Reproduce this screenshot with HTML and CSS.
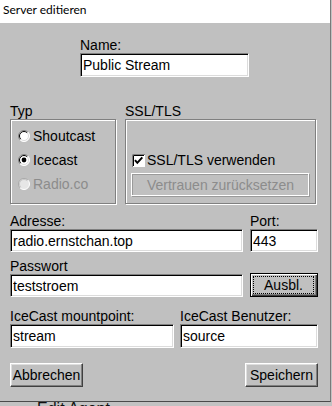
FILE: index.html
```html
<!DOCTYPE html>
<html lang="de">
<head>
<meta charset="utf-8">
<title>Server editieren</title>
<link rel="stylesheet" href="styles.css">
</head>
<body>
<div class="window">
  <div class="titlebar">Server editieren</div>
  <div class="content">
    <div class="name-block">
      <div class="lbl">Name:</div>
      <input class="field name-field" value="Public Stream">
    </div>

    <div class="groups">
      <div class="group">
        <div class="lbl">Typ</div>
        <div class="box typ-box">
          <div class="opt">
            <svg class="radio" width="12" height="12" viewBox="0 0 12 12">
              <circle cx="6" cy="6" r="5.5" fill="#fff"/>
              <path d="M2.1 9.9A5.5 5.5 0 0 1 9.9 2.1" fill="none" stroke="#808080"/>
              <path d="M9.9 2.1A5.5 5.5 0 0 1 2.1 9.9" fill="none" stroke="#fff"/>
              <path d="M2.8 9.2A4.5 4.5 0 0 1 9.2 2.8" fill="none" stroke="#000"/>
              <path d="M9.2 2.8A4.5 4.5 0 0 1 2.8 9.2" fill="none" stroke="#dcdcdc"/>
            </svg>
            <span>Shoutcast</span>
          </div>
          <div class="opt">
            <svg class="radio" width="12" height="12" viewBox="0 0 12 12">
              <circle cx="6" cy="6" r="5.5" fill="#fff"/>
              <path d="M2.1 9.9A5.5 5.5 0 0 1 9.9 2.1" fill="none" stroke="#808080"/>
              <path d="M9.9 2.1A5.5 5.5 0 0 1 2.1 9.9" fill="none" stroke="#fff"/>
              <path d="M2.8 9.2A4.5 4.5 0 0 1 9.2 2.8" fill="none" stroke="#000"/>
              <path d="M9.2 2.8A4.5 4.5 0 0 1 2.8 9.2" fill="none" stroke="#dcdcdc"/>
              <circle cx="6" cy="6" r="2.4" fill="#000"/>
            </svg>
            <span>Icecast</span>
          </div>
          <div class="opt disabled">
            <svg class="radio" width="12" height="12" viewBox="0 0 12 12">
              <circle cx="6" cy="6" r="5.5" fill="#e6e6e6"/>
              <path d="M2.1 9.9A5.5 5.5 0 0 1 9.9 2.1" fill="none" stroke="#a8a8a8"/>
              <path d="M9.9 2.1A5.5 5.5 0 0 1 2.1 9.9" fill="none" stroke="#fff"/>
              <path d="M2.8 9.2A4.5 4.5 0 0 1 9.2 2.8" fill="none" stroke="#c8c8c8"/>
            </svg>
            <span>Radio.co</span>
          </div>
        </div>
      </div>

      <div class="group">
        <div class="lbl">SSL/TLS</div>
        <div class="box ssl-box">
          <div class="check-row">
            <svg class="check" width="13" height="13" viewBox="0 0 13 13">
              <rect x="0" y="0" width="13" height="13" fill="#fff"/>
              <path d="M0.5 13V0.5H13" fill="none" stroke="#808080"/>
              <path d="M1.5 12V1.5H12" fill="none" stroke="#000"/>
              <path d="M3 6.2L5.3 8.8L10.3 3.3" fill="none" stroke="#000" stroke-width="2"/>
            </svg>
            <span>SSL/TLS verwenden</span>
          </div>
          <div class="btn btn-disabled">Vertrauen zurücksetzen</div>
        </div>
      </div>
    </div>

    <div class="row row-addr">
      <div class="col w-main">
        <div class="lbl">Adresse:</div>
        <input class="field h23" value="radio.ernstchan.top">
      </div>
      <div class="col w-side">
        <div class="lbl">Port:</div>
        <input class="field h23" value="443">
      </div>
    </div>

    <div class="row row-pass">
      <div class="col w-main">
        <div class="lbl">Passwort</div>
        <input class="field h23" value="teststroem">
      </div>
      <div class="col w-side col-end">
        <div class="btn btn-focus h23"><span class="focus-ring">Ausbl.</span></div>
      </div>
    </div>

    <div class="row row-ice">
      <div class="col w-mount">
        <div class="lbl">IceCast mountpoint:</div>
        <input class="field h24" value="stream">
      </div>
      <div class="col w-user">
        <div class="lbl">IceCast Benutzer:</div>
        <input class="field h24" value="source">
      </div>
    </div>

    <div class="actions">
      <div class="btn btn-action">Abbrechen</div>
      <div class="btn btn-action">Speichern</div>
    </div>
  </div>
</div>
<div class="behind">Edit Agent</div>
</body>
</html>
```

FILE: styles.css
```css
* {
  box-sizing: border-box;
}

html,
body {
  margin: 0;
  padding: 0;
}

body {
  width: 332px;
  height: 406px;
  overflow: hidden;
  background: #c2c2c2;
  font-family: "Liberation Sans", Arial, sans-serif;
  font-size: 14px;
  color: #000;
}

.window {
  width: 331px;
  height: 402px;
  background: #c0c0c0;
  border-right: 1px solid #7a7a7a;
  border-bottom: 1px solid #4a4a4a;
  display: flex;
  flex-direction: column;
}

.titlebar {
  height: 23px;
  flex: none;
  background: #fff;
  padding-left: 3px;
  font-family: Lato, "Noto Sans", sans-serif;
  font-size: 12px;
  line-height: 20px;
  color: #000;
}

.content {
  display: flex;
  flex-direction: column;
  padding: 15px 12px 0 10px;
}

.lbl {
  height: 15px;
  line-height: 15px;
  white-space: nowrap;
}

.field {
  display: block;
  margin: 0;
  padding: 0 2px;
  font-family: "Liberation Sans", Arial, sans-serif;
  font-size: 14px;
  color: #000;
  background: #fff;
  border: 1px solid;
  border-color: #808080 #fff #fff #808080;
  box-shadow: inset 1px 1px 0 #000, inset -1px -1px 0 #dcdcdc;
  outline: none;
  width: 100%;
  height: 23px;
}

.h23 {
  height: 23px;
}

.h24 {
  height: 24px;
}

.name-block {
  margin-left: 70px;
  width: 169px;
}

.name-field {
  height: 24px;
}

.groups {
  display: flex;
  gap: 9px;
  margin-top: 27px;
}

.box {
  height: 85px;
  border: 1px solid #808080;
  box-shadow: inset 1px 1px 0 #fff, 1px 1px 0 #fff;
}

.typ-box {
  width: 106px;
  padding: 4px 0 0 7px;
}

.opt {
  height: 24px;
  display: flex;
  align-items: center;
  gap: 3px;
}

.radio,
.check {
  display: block;
  flex: none;
}

.opt.disabled {
  color: #8c8c8c;
}

.ssl-box {
  width: 191px;
  padding: 28px 4px 0 5px;
}

.check-row {
  height: 24px;
  display: flex;
  align-items: center;
  gap: 2px;
  padding-left: 1px;
}

.btn {
  display: flex;
  align-items: center;
  justify-content: center;
  height: 24px;
  white-space: nowrap;
  background: #c0c0c0;
  border: 1px solid;
  border-color: #fff #404040 #404040 #fff;
  box-shadow: inset -1px -1px 0 #808080, inset 1px 1px 0 #dedede;
}

.btn-disabled {
  margin-top: 1px;
  width: 179px;
  color: #8c8c8c;
  border-color: #fff #9a9a9a #9a9a9a #fff;
  box-shadow: inset -1px -1px 0 #fff, inset 1px 1px 0 #9a9a9a;
}

.row {
  display: flex;
}

.row-addr {
  margin-top: 10px;
  gap: 7px;
}

.row-pass {
  margin-top: 7px;
  gap: 7px;
}

.row-ice {
  margin-top: 12px;
  gap: 6px;
}

.col {
  display: flex;
  flex-direction: column;
}

.col-end {
  justify-content: flex-end;
}

.w-main {
  width: 233px;
}

.w-side {
  width: 68px;
}

.w-mount {
  width: 164px;
}

.w-user {
  width: 138px;
}

.btn-focus {
  border: 1px solid #000;
  box-shadow: inset 1px 1px 0 #fff, inset -1px -1px 0 #404040, inset -2px -2px 0 #808080;
  padding: 2px 3px 2px 2px;
}

.focus-ring {
  flex: 1;
  align-self: stretch;
  display: flex;
  align-items: center;
  justify-content: center;
  border: 1px dotted #000;
}

.actions {
  margin-top: 15px;
  display: flex;
  justify-content: space-between;
}

.btn-action {
  width: 73px;
}

.behind {
  padding-left: 37px;
  font-family: "Liberation Sans", Arial, sans-serif;
  font-size: 16px;
  line-height: 14px;
  color: #111;
}
```
